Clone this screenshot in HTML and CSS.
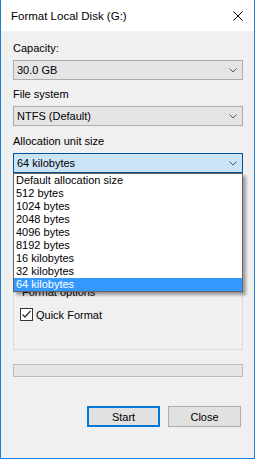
FILE: index.html
```html
<!DOCTYPE html>
<html lang="en">
  <head>
    <meta charset="UTF-8" />
    <meta name="viewport" content="width=device-width, initial-scale=1.0" />
    <title>Format Local Disk (G:)</title>
    <link rel="stylesheet" href="styles.css">
  </head>
  <body>
    <div class="window">
      <!-- Title bar -->
      <div class="titlebar">
        <span class="title">Format Local Disk (G:)</span>
        <button class="close-x" aria-label="Close">
          <svg width="10" height="10" viewBox="0 0 10 10">
            <path d="M0.5 0.5 L9.5 9.5 M9.5 0.5 L0.5 9.5" stroke="#000" stroke-width="1" fill="none" />
          </svg>
        </button>
      </div>

      <div class="dialog">
        <div class="field">
          <div class="field-label">Capacity:</div>
          <div class="combo">
            <span>30.0 GB</span>
            <svg class="chevron" width="8" height="5" viewBox="0 0 8 5"><polyline points="0.5,0.5 4,4 7.5,0.5" /></svg>
          </div>
        </div>

        <div class="field">
          <div class="field-label">File system</div>
          <div class="combo">
            <span>NTFS (Default)</span>
            <svg class="chevron" width="8" height="5" viewBox="0 0 8 5"><polyline points="0.5,0.5 4,4 7.5,0.5" /></svg>
          </div>
        </div>

        <div class="field alloc">
          <div class="field-label">Allocation unit size</div>
          <div class="combo open">
            <span>64 kilobytes</span>
            <svg class="chevron" width="8" height="5" viewBox="0 0 8 5"><polyline points="0.5,0.5 4,4 7.5,0.5" /></svg>
          </div>
          <!-- Open dropdown list -->
          <ul class="dropdown">
            <li>Default allocation size</li>
            <li>512 bytes</li>
            <li>1024 bytes</li>
            <li>2048 bytes</li>
            <li>4096 bytes</li>
            <li>8192 bytes</li>
            <li>16 kilobytes</li>
            <li>32 kilobytes</li>
            <li class="selected">64 kilobytes</li>
          </ul>
        </div>

        <fieldset class="options">
          <legend>Format options</legend>
          <label class="check">
            <span class="checkbox">
              <svg width="13" height="13" viewBox="0 0 13 13">
                <rect x="0.5" y="0.5" width="12" height="12" fill="#fff" stroke="#333" />
                <polyline points="2.5,6.5 5,9 10.5,3" fill="none" stroke="#333" stroke-width="1.3" />
              </svg>
            </span>
            Quick Format
          </label>
        </fieldset>

        <div class="progress"></div>

        <div class="actions">
          <button class="btn default">Start</button>
          <button class="btn">Close</button>
        </div>
      </div>
    </div>
  </body>
</html>
```

FILE: styles.css
```css
* {
  margin: 0;
  padding: 0;
  box-sizing: border-box;
}

body,
html {
  height: 100%;
}

body {
  font-family: "Liberation Sans", Arial, sans-serif;
  font-size: 11px;
  color: #000;
  background: #f0f0f0;
}

.window {
  height: 100vh;
  background: #f0f0f0;
  border: 1px solid #1c7fd6;
  border-top: none;
}

.titlebar {
  height: 31px;
  background: #fff;
  display: flex;
  align-items: center;
  justify-content: space-between;
  padding-left: 10px;
}

.title {
  font-size: 11.5px;
}

.close-x {
  background: none;
  border: none;
  width: 10px;
  height: 10px;
  margin-right: 11px;
  display: flex;
}

.dialog {
  padding: 10px 11px 0 12px;
}

.field {
  margin-bottom: 7px;
}

.field-label {
  line-height: 15px;
  margin-bottom: 4px;
}

.combo {
  height: 20px;
  border: 1px solid #adadad;
  background: #e5e5e5;
  display: flex;
  align-items: center;
  justify-content: space-between;
  padding: 0 5px 0 3px;
}

.combo.open {
  background: #cce4f7;
  border-color: #005499;
}

.chevron polyline {
  fill: none;
  stroke: #555;
  stroke-width: 1;
}

.alloc {
  position: relative;
  padding-top: 1px;
}

.dropdown {
  position: absolute;
  top: 100%;
  left: 0;
  right: 0;
  list-style: none;
  background: #fff;
  border: 1px solid #646464;
  box-shadow: 3px 3px 3px rgba(0, 0, 0, 0.35);
  z-index: 2;
}

.dropdown li {
  height: 13px;
  line-height: 13px;
  padding-left: 2px;
}

.dropdown li.selected {
  background: #3399ff;
  color: #fff;
}

.options {
  margin-top: 112px;
  border: 1px solid #dcdcdc;
  padding: 8px 6px 28px;
}

.options legend {
  line-height: 15px;
  padding: 0 2px;
}

.check {
  display: flex;
  align-items: center;
  gap: 3px;
  height: 13px;
}

.checkbox {
  display: flex;
}

.progress {
  margin-top: 14px;
  height: 13px;
  border: 1px solid #bcbcbc;
  background: #e6e6e6;
}

.actions {
  display: flex;
  justify-content: flex-end;
  gap: 8px;
  margin-top: 29px;
  margin-right: 2px;
}

.btn {
  width: 73px;
  height: 21px;
  font-family: inherit;
  font-size: 11px;
  color: #000;
  background: #e1e1e1;
  border: 1px solid #adadad;
}

.btn.default {
  border: 2px solid #0078d7;
}
```
